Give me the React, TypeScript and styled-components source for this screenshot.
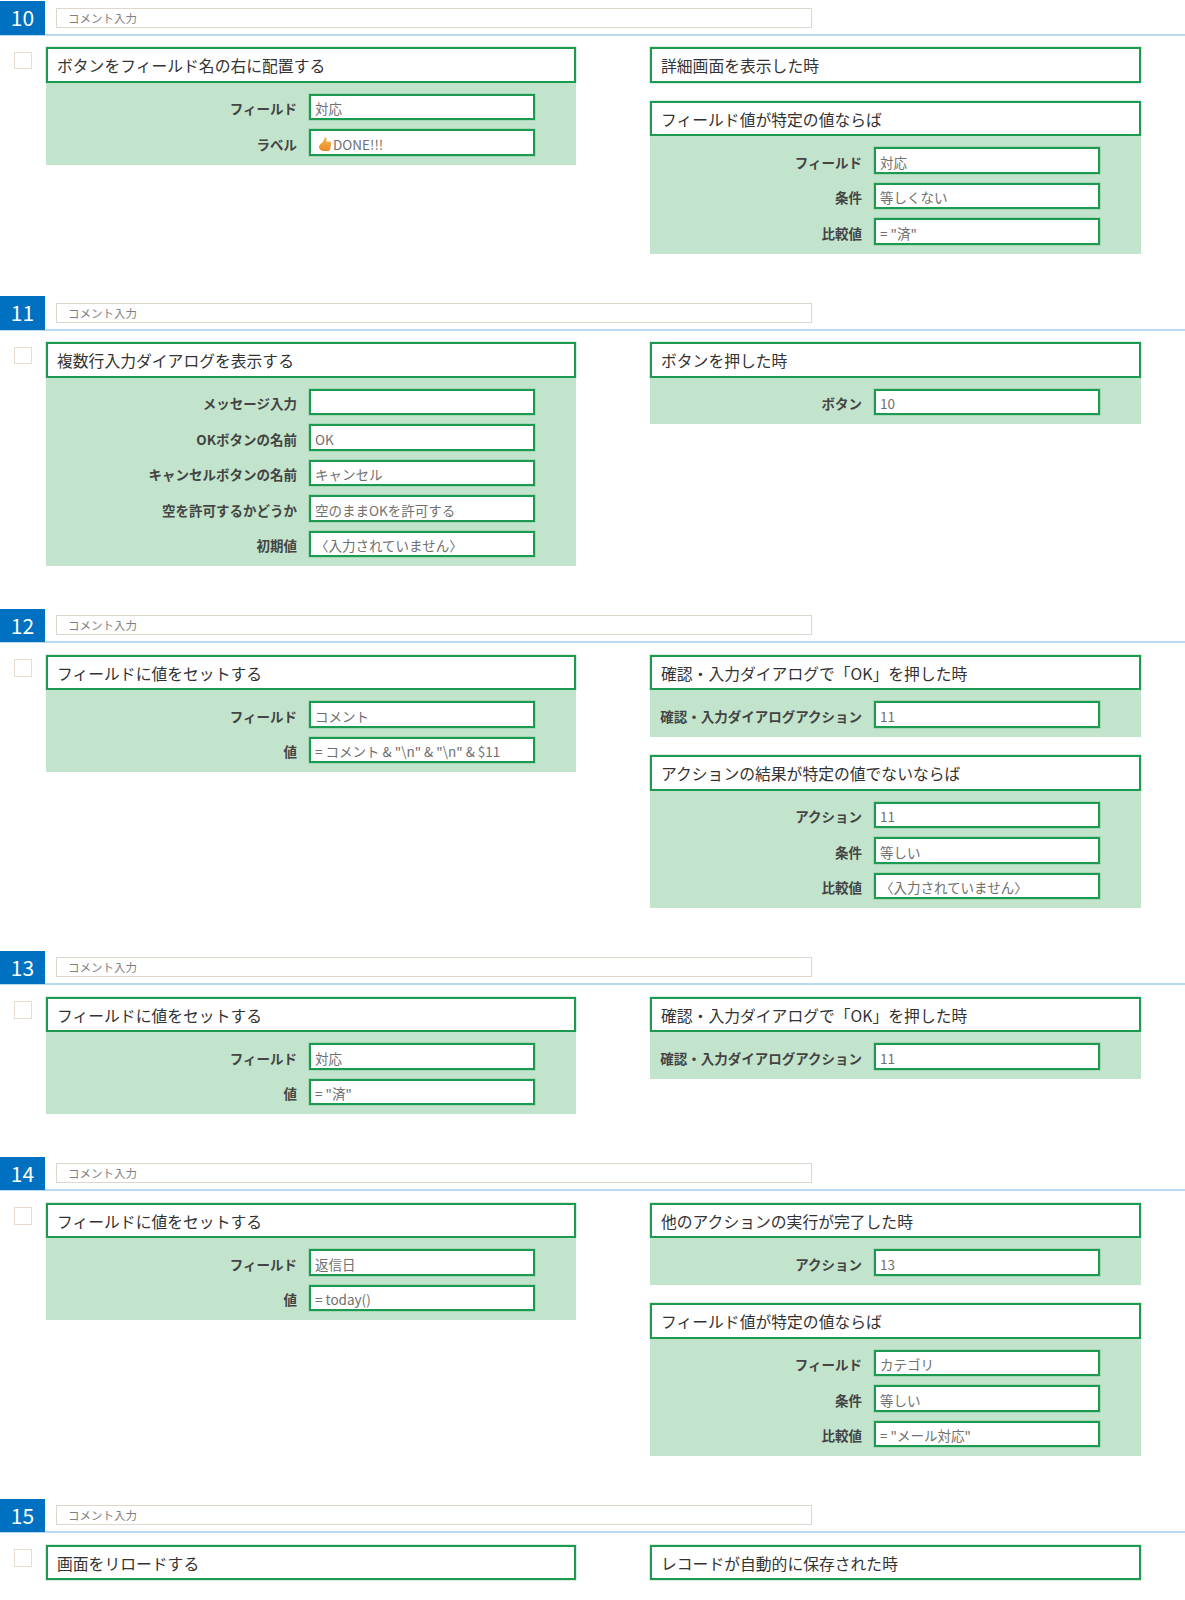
import React from 'react';
import styled, { createGlobalStyle } from 'styled-components';

const GlobalStyle = createGlobalStyle`
  html, body {
    margin: 0;
    padding: 0;
    background: #fff;
    font-family: "Noto Sans CJK JP", "Noto Sans", sans-serif;
    color: #333;
  }
`;

const Page = styled.div`
  width: 1185px;
  height: 1600px;
  overflow: hidden;
  padding-top: 1px;
  box-sizing: border-box;
`;

const Section = styled.section`
  margin-bottom: 42.2px;
`;

const SectionHead = styled.div`
  display: flex;
  height: 34.5px;
  box-sizing: border-box;
  border-bottom: 2px solid #b8daf1;
`;

const Num = styled.div`
  width: 45px;
  height: 33.5px;
  box-sizing: border-box;
  background: #0070c0;
  color: #fff;
  font-size: 21px;
  line-height: 33px;
  text-align: center;
`;

const Comment = styled.div`
  width: 756px;
  height: 20px;
  margin: 6.5px 0 0 11px;
  border: 1.5px solid #e0d7cc;
  box-sizing: border-box;
  padding-left: 11px;
  font-size: 11.5px;
  line-height: 19px;
  color: #808080;
`;

const Content = styled.div`
  display: flex;
  margin-top: 11.5px;
  padding-left: 14px;
`;

const Check = styled.div`
  width: 17.5px;
  height: 17.5px;
  margin-top: 4.5px;
  border: 1.5px solid #e6dccf;
  box-sizing: border-box;
`;

const LeftCol = styled.div`
  width: 530px;
  margin-left: 14.5px;
`;

const RightCol = styled.div`
  width: 491px;
  margin-left: 74px;
  display: flex;
  flex-direction: column;
  gap: 18.2px;
`;

const CardTitle = styled.div`
  height: 35.5px;
  border: 2px solid #1c9a50;
  box-shadow: 0 0 0 0.5px rgba(28, 154, 80, 0.35);
  box-sizing: border-box;
  background: #fff;
  padding-left: 9px;
  font-size: 15.8px;
  line-height: 33px;
  color: #333;
`;

const CardBody = styled.div`
  background: #c3e4cc;
  padding: 11.3px 0 9px;
  display: flex;
  flex-direction: column;
  gap: 9px;
`;

const FieldRow = styled.div`
  display: flex;
  align-items: center;
  justify-content: flex-end;
  padding-right: 41px;
`;

const FieldLabel = styled.div`
  padding-top: 2px;
  font-size: 13.5px;
  font-weight: 700;
  color: #444;
  margin-right: 12px;
  white-space: nowrap;
`;

const FieldValue = styled.div`
  width: 226px;
  height: 26.5px;
  border: 2px solid #1c9a50;
  box-shadow: 0 0 0 0.5px rgba(28, 154, 80, 0.35);
  box-sizing: border-box;
  background: #fff;
  padding: 2.5px 0 0 4px;
  display: flex;
  align-items: center;
  gap: 1px;
  font-size: 13.5px;
  line-height: 20px;
  color: #707070;
  white-space: nowrap;
`;

const ThumbSvg = styled.svg`
  margin: 0 0 0 3px;
  flex: none;
`;

function ThumbIcon() {
  return (
    <ThumbSvg width="14" height="16" viewBox="0 0 14 16">
      <defs>
        <linearGradient id="thumbFill" x1="0" y1="0" x2="0" y2="1">
          <stop offset="0" stopColor="#f8b84a" />
          <stop offset="1" stopColor="#e88a2c" />
        </linearGradient>
      </defs>
      <path
        d="M7.2 1 C8.6 1.2 8.9 3 8.2 5.6 L11.2 5.6 C12.8 5.6 13.4 6.8 13 8.2 L12.2 13 C11.9 14.4 10.9 15 9.5 15 L5.6 15 C2.8 15 1 13.2 1 11 C1 9 2.6 7.8 4.4 6.2 C5.8 4.9 6.1 2.6 7.2 1 Z"
        fill="url(#thumbFill)"
      />
    </ThumbSvg>
  );
}

type Field = { label: string; value: string; icon?: boolean };
type CardData = { title: string; fields?: Field[] };
type SectionData = { num: string; left: CardData; right: CardData[] };

const sections: SectionData[] = [
  {
    num: '10',
    left: {
      title: 'ボタンをフィールド名の右に配置する',
      fields: [
        { label: 'フィールド', value: '対応' },
        { label: 'ラベル', value: 'DONE!!!', icon: true },
      ],
    },
    right: [
      { title: '詳細画面を表示した時' },
      {
        title: 'フィールド値が特定の値ならば',
        fields: [
          { label: 'フィールド', value: '対応' },
          { label: '条件', value: '等しくない' },
          { label: '比較値', value: '= "済"' },
        ],
      },
    ],
  },
  {
    num: '11',
    left: {
      title: '複数行入力ダイアログを表示する',
      fields: [
        { label: 'メッセージ入力', value: '' },
        { label: 'OKボタンの名前', value: 'OK' },
        { label: 'キャンセルボタンの名前', value: 'キャンセル' },
        { label: '空を許可するかどうか', value: '空のままOKを許可する' },
        { label: '初期値', value: '〈入力されていません〉' },
      ],
    },
    right: [{ title: 'ボタンを押した時', fields: [{ label: 'ボタン', value: '10' }] }],
  },
  {
    num: '12',
    left: {
      title: 'フィールドに値をセットする',
      fields: [
        { label: 'フィールド', value: 'コメント' },
        { label: '値', value: '= コメント & "\\n" & "\\n" & $11' },
      ],
    },
    right: [
      {
        title: '確認・入力ダイアログで「OK」を押した時',
        fields: [{ label: '確認・入力ダイアログアクション', value: '11' }],
      },
      {
        title: 'アクションの結果が特定の値でないならば',
        fields: [
          { label: 'アクション', value: '11' },
          { label: '条件', value: '等しい' },
          { label: '比較値', value: '〈入力されていません〉' },
        ],
      },
    ],
  },
  {
    num: '13',
    left: {
      title: 'フィールドに値をセットする',
      fields: [
        { label: 'フィールド', value: '対応' },
        { label: '値', value: '= "済"' },
      ],
    },
    right: [
      {
        title: '確認・入力ダイアログで「OK」を押した時',
        fields: [{ label: '確認・入力ダイアログアクション', value: '11' }],
      },
    ],
  },
  {
    num: '14',
    left: {
      title: 'フィールドに値をセットする',
      fields: [
        { label: 'フィールド', value: '返信日' },
        { label: '値', value: '= today()' },
      ],
    },
    right: [
      { title: '他のアクションの実行が完了した時', fields: [{ label: 'アクション', value: '13' }] },
      {
        title: 'フィールド値が特定の値ならば',
        fields: [
          { label: 'フィールド', value: 'カテゴリ' },
          { label: '条件', value: '等しい' },
          { label: '比較値', value: '= "メール対応"' },
        ],
      },
    ],
  },
  {
    num: '15',
    left: { title: '画面をリロードする' },
    right: [{ title: 'レコードが自動的に保存された時' }],
  },
];

function Card({ card }: { card: CardData }) {
  return (
    <div>
      <CardTitle>{card.title}</CardTitle>
      {card.fields && (
        <CardBody>
          {card.fields.map((f) => (
            <FieldRow key={f.label}>
              <FieldLabel>{f.label}</FieldLabel>
              <FieldValue>
                {f.icon && <ThumbIcon />}
                {f.value}
              </FieldValue>
            </FieldRow>
          ))}
        </CardBody>
      )}
    </div>
  );
}

export default function App() {
  return (
    <Page>
      <GlobalStyle />
      {sections.map((s) => (
        <Section key={s.num}>
          <SectionHead>
            <Num>{s.num}</Num>
            <Comment>コメント入力</Comment>
          </SectionHead>
          <Content>
            <Check />
            <LeftCol>
              <Card card={s.left} />
            </LeftCol>
            <RightCol>
              {s.right.map((c) => (
                <Card key={c.title} card={c} />
              ))}
            </RightCol>
          </Content>
        </Section>
      ))}
    </Page>
  );
}
